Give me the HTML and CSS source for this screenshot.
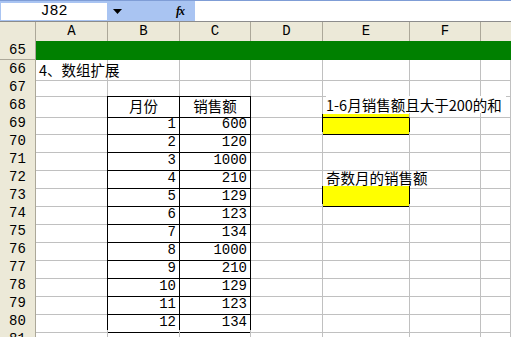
FILE: index.html
```html
<!DOCTYPE html>
<html>
<head>
  <title>Sheet</title>
  <link rel="stylesheet" href="styles.css">
</head>
<body>
  <div class="sheet">
    <div class="formula-bar">
      <div class="name-box">J82</div>
      <div class="name-drop">
        <svg width="9" height="5" viewBox="0 0 9 5"><path d="M0 0h9L4.5 5z" fill="#000"/></svg>
      </div>
      <div class="fx">fx</div>
      <div class="formula-input"></div>
    </div>

    <div class="row head">
      <div class="rh"></div>
      <div class="ch">A</div><div class="ch">B</div><div class="ch">C</div><div class="ch">D</div>
      <div class="ch">E</div><div class="ch">F</div><div class="ch last"></div>
    </div>

    <div class="row green">
      <div class="rh">65</div>
      <div class="fill"></div>
    </div>

    <div class="row">
      <div class="rh">66</div>
      <div class="c zh">4、数组扩展</div><div class="c"></div><div class="c"></div><div class="c"></div>
      <div class="c"></div><div class="c"></div><div class="c"></div>
    </div>

    <div class="row">
      <div class="rh">67</div>
      <div class="c"></div><div class="c bb"></div><div class="c bb"></div><div class="c"></div>
      <div class="c"></div><div class="c"></div><div class="c"></div>
    </div>

    <div class="row">
      <div class="rh">68</div>
      <div class="c br"></div><div class="c t center zh">月份</div><div class="c t center zh">销售额</div><div class="c"></div>
      <div class="c bb over"><span class="zh">1-6月销售额且大于200的和</span></div><div class="c"></div><div class="c"></div>
    </div>

    <div class="row">
      <div class="rh">69</div>
      <div class="c br"></div><div class="c t num">1</div><div class="c t num">600</div><div class="c br"></div>
      <div class="c t yellow"></div><div class="c"></div><div class="c"></div>
    </div>

    <div class="row">
      <div class="rh">70</div>
      <div class="c br"></div><div class="c t num">2</div><div class="c t num">120</div><div class="c"></div>
      <div class="c"></div><div class="c"></div><div class="c"></div>
    </div>

    <div class="row">
      <div class="rh">71</div>
      <div class="c br"></div><div class="c t num">3</div><div class="c t num">1000</div><div class="c"></div>
      <div class="c"></div><div class="c"></div><div class="c"></div>
    </div>

    <div class="row">
      <div class="rh">72</div>
      <div class="c br"></div><div class="c t num">4</div><div class="c t num">210</div><div class="c"></div>
      <div class="c bb zh">奇数月的销售额</div><div class="c"></div><div class="c"></div>
    </div>

    <div class="row">
      <div class="rh">73</div>
      <div class="c br"></div><div class="c t num">5</div><div class="c t num">129</div><div class="c br"></div>
      <div class="c t yellow"></div><div class="c"></div><div class="c"></div>
    </div>

    <div class="row">
      <div class="rh">74</div>
      <div class="c br"></div><div class="c t num">6</div><div class="c t num">123</div><div class="c"></div>
      <div class="c"></div><div class="c"></div><div class="c"></div>
    </div>

    <div class="row">
      <div class="rh">75</div>
      <div class="c br"></div><div class="c t num">7</div><div class="c t num">134</div><div class="c"></div>
      <div class="c"></div><div class="c"></div><div class="c"></div>
    </div>

    <div class="row">
      <div class="rh">76</div>
      <div class="c br"></div><div class="c t num">8</div><div class="c t num">1000</div><div class="c"></div>
      <div class="c"></div><div class="c"></div><div class="c"></div>
    </div>

    <div class="row">
      <div class="rh">77</div>
      <div class="c br"></div><div class="c t num">9</div><div class="c t num">210</div><div class="c"></div>
      <div class="c"></div><div class="c"></div><div class="c"></div>
    </div>

    <div class="row">
      <div class="rh">78</div>
      <div class="c br"></div><div class="c t num">10</div><div class="c t num">129</div><div class="c"></div>
      <div class="c"></div><div class="c"></div><div class="c"></div>
    </div>

    <div class="row">
      <div class="rh">79</div>
      <div class="c br"></div><div class="c t num">11</div><div class="c t num">123</div><div class="c"></div>
      <div class="c"></div><div class="c"></div><div class="c"></div>
    </div>

    <div class="row">
      <div class="rh">80</div>
      <div class="c br"></div><div class="c t num">12</div><div class="c t num">134</div><div class="c"></div>
      <div class="c"></div><div class="c"></div><div class="c"></div>
    </div>

    <div class="row">
      <div class="rh">81</div>
      <div class="c"></div><div class="c"></div><div class="c"></div><div class="c"></div>
      <div class="c"></div><div class="c"></div><div class="c"></div>
    </div>
  </div>
</body>
</html>
```

FILE: styles.css
```css
body {
  margin: 0;
  background: #fff;
  color: #000;
  font-family: "Liberation Mono", "Noto Sans CJK SC", monospace;
  font-size: 14px;
  overflow: hidden;
}

.sheet {
  width: 511px;
  height: 337px;
  overflow: hidden;
}

.formula-bar {
  display: flex;
  align-items: center;
  height: 22px;
  box-sizing: border-box;
  background: #a9c4f2;
  border-top: 1px solid #7f9dd6;
  border-bottom: 1px solid #8c8c8c;
}

.name-box {
  width: 106px;
  height: 17px;
  margin-left: 1px;
  background: #fff;
  text-align: center;
  line-height: 18px;
  font-family: "Liberation Mono", monospace;
  font-size: 15px;
}

.name-drop {
  width: 20px;
  display: flex;
  justify-content: center;
}

.fx {
  margin-left: 49px;
  width: 10px;
  font-family: "Liberation Serif", serif;
  font-style: italic;
  font-weight: bold;
  font-size: 12px;
  letter-spacing: -1px;
}

.formula-input {
  flex: 1;
  height: 20px;
  margin-left: 9px;
  background: #fff;
}

.row {
  display: grid;
  grid-template-columns: 36px 72px 72px 71px 72px 87px 71px 1fr;
  height: 18px;
}

.row > div {
  box-sizing: border-box;
  border-right: 1px solid #c0c0c0;
  border-bottom: 1px solid #c0c0c0;
  white-space: nowrap;
  line-height: 20px;
  padding: 0 3px;
}

.row.head {
  height: 19px;
}

.head > div {
  background: #ece9d8;
  border-right-color: #aca899;
  border-bottom-color: #aca899;
  text-align: center;
  font-family: "Liberation Mono", monospace;
  font-size: 14px;
  line-height: 19px;
}

.row > .rh {
  background: #ece9d8;
  border-right-color: #aca899;
  border-bottom-color: #aca899;
  text-align: center;
  font-size: 14px;
  line-height: 18px;
  padding: 0;
}

.head > .last {
  border-right: none;
}

.row.green {
  height: 19px;
}

.green .fill {
  grid-column: 2 / -1;
  background: #008000;
  border: none;
}

.zh {
  font-family: "Noto Sans CJK SC", sans-serif;
  font-size: 14.5px;
  line-height: 17px;
}

.row > .center {
  text-align: center;
}

.row > .num {
  text-align: right;
  padding-right: 3px;
}

.row > .t {
  border-right-color: #000;
  border-bottom-color: #000;
}

.row > .br {
  border-right-color: #000;
}

.row > .bb {
  border-bottom-color: #000;
}

.row > .yellow {
  background: #ffff00;
}

.over {
  position: relative;
}

.over span {
  position: relative;
  z-index: 1;
  display: inline-block;
  padding-right: 4px;
  background: #fff;
}
```
